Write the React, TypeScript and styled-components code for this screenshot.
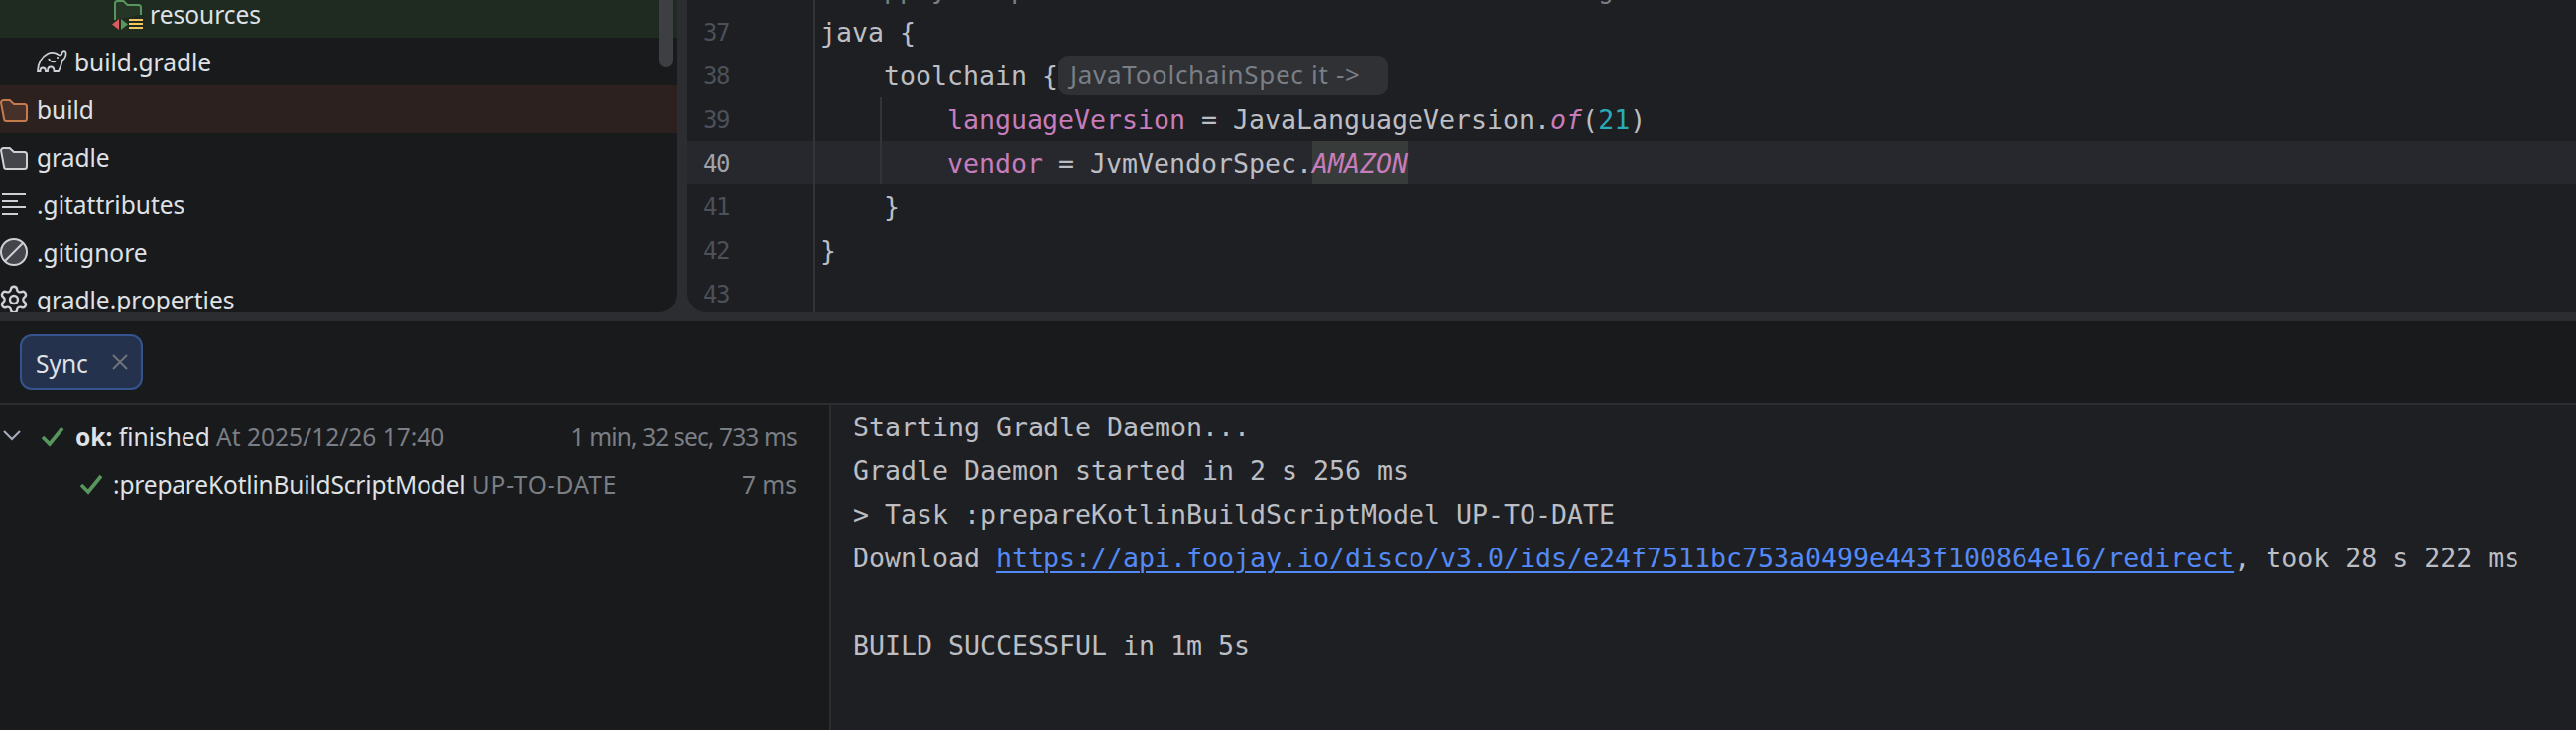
import { Settings } from "lucide-react";
import styled, { createGlobalStyle } from "styled-components";

const GlobalStyle = createGlobalStyle`
  html, body {
    margin: 0;
    background: #2b2d30;
  }
`;

const UI_FONT = `"Noto Sans", "Open Sans", sans-serif`;
const MONO_FONT = `"DejaVu Sans Mono", "Liberation Mono", monospace`;

const Page = styled.div`
  width: 2597px;
  height: 736px;
  overflow: hidden;
  display: flex;
  flex-direction: column;
  background: #2b2d30;
`;

const TopArea = styled.div`
  height: 315px;
  flex: none;
  display: flex;
  gap: 10px;
  margin-bottom: 9px;
`;

const Sidebar = styled.div`
  position: relative;
  width: 683px;
  flex: none;
  overflow: hidden;
  background: #191a1c;
  border-bottom-right-radius: 20px;
  font-family: ${UI_FONT};
  font-size: 24.5px;
  color: #dfe1e5;
`;

const FileList = styled.div`
  margin-top: -10px;
`;

const FileRow = styled.div<{ $level: number; $bg?: string }>`
  height: 48px;
  display: flex;
  align-items: center;
  padding-left: ${(p) => p.$level * 38}px;
  background: ${(p) => p.$bg ?? "transparent"};
  svg {
    flex: none;
    margin: 0 7px 0 -2px;
  }
`;

const Scrollbar = styled.div`
  position: absolute;
  top: -10px;
  left: 664px;
  width: 14px;
  height: 78px;
  border-radius: 7px;
  background: #3d3f42;
`;

const Editor = styled.div`
  flex: 1;
  overflow: hidden;
  background: #1e1f22;
  border-bottom-left-radius: 20px;
  font-family: ${MONO_FONT};
  font-size: 26.58px;
  color: #bcbec4;
`;

const CodeLines = styled.div`
  margin-top: -34px;
`;

const CodeLine = styled.div<{ $current?: boolean }>`
  height: 44px;
  display: flex;
  background: ${(p) => (p.$current ? "#26282e" : "transparent")};
`;

const LineNumber = styled.div<{ $current?: boolean }>`
  width: 111px;
  flex: none;
  padding-left: 16px;
  border-right: 2px solid #313438;
  font-size: 24px;
  letter-spacing: -1.4px;
  line-height: 46px;
  color: ${(p) => (p.$current ? "#a1a3ab" : "#4b5059")};
`;

const CodeText = styled.div<{ $guide?: boolean }>`
  position: relative;
  flex: 1;
  padding-left: 5px;
  line-height: 46px;
  white-space: pre;
  &::before {
    content: "";
    display: ${(p) => (p.$guide ? "block" : "none")};
    position: absolute;
    left: 65px;
    top: 0;
    bottom: 0;
    width: 2px;
    background: #313438;
  }
`;

const Comment = styled.span`
  color: #7a7e85;
`;

const Prop = styled.span`
  color: #c77dbb;
`;

const ItalicProp = styled(Prop)`
  font-style: italic;
`;

const Highlighted = styled(ItalicProp)`
  display: inline-block;
  height: 44px;
  background: #373b39;
`;

const NumberLit = styled.span`
  color: #2aacb8;
`;

const InlayHint = styled.span`
  display: inline-block;
  box-sizing: border-box;
  width: 332px;
  height: 40px;
  line-height: 38px;
  vertical-align: top;
  margin-top: 2px;
  padding-left: 12px;
  border-radius: 10px;
  background: #2f3135;
  color: #7a7e85;
  font-family: ${UI_FONT};
  font-size: 26px;
  letter-spacing: 0.7px;
`;

const BottomArea = styled.div`
  flex: 1;
  min-height: 0;
  display: flex;
  flex-direction: column;
  background: #191a1c;
`;

const TabBar = styled.div`
  height: 84px;
  flex: none;
  display: flex;
  align-items: center;
  padding-left: 20px;
  box-sizing: border-box;
  border-bottom: 2px solid #2b2d30;
`;

const Tab = styled.div`
  width: 124px;
  height: 56px;
  box-sizing: border-box;
  display: flex;
  align-items: center;
  padding: 3px 0 0 14px;
  border: 2px solid #35538f;
  border-radius: 12px;
  background: #25324d;
  font-family: ${UI_FONT};
  font-size: 24.5px;
  color: #dfe1e5;
  svg {
    margin: -3px 0 0 24px;
  }
`;

const Split = styled.div`
  flex: 1;
  min-height: 0;
  display: flex;
`;

const BuildTree = styled.div`
  width: 836px;
  flex: none;
  padding-top: 8px;
  border-right: 2px solid #2b2d30;
  font-family: ${UI_FONT};
  font-size: 24.5px;
  color: #dfe1e5;
`;

const TreeRow = styled.div<{ $pad: number }>`
  height: 48px;
  display: flex;
  align-items: center;
  padding: 0 33px 0 ${(p) => p.$pad}px;
  white-space: pre;
  svg {
    flex: none;
  }
`;

const IconSlot = styled.span<{ $left?: number; $right: number }>`
  display: flex;
  margin: 0 ${(p) => p.$right}px 0 ${(p) => p.$left ?? 0}px;
`;

const TreeLabel = styled.span``;

const TaskName = styled.span`
  letter-spacing: -0.17px;
`;

const Muted = styled.span`
  color: #7a7e85;
`;

const UpToDate = styled(Muted)`
  letter-spacing: 0.8px;
`;

const Duration = styled(Muted)<{ $tight?: boolean }>`
  margin-left: auto;
  letter-spacing: ${(p) => (p.$tight ? "-0.85px" : "0")};
`;

const Console = styled.div`
  flex: 1;
  padding-left: 22px;
  background: #1e1f22;
  font-family: ${MONO_FONT};
  font-size: 26.58px;
  line-height: 46px;
  color: #bcbec4;
  white-space: pre;
`;

const ConsoleLine = styled.div`
  height: 44px;
`;

const ConsoleLink = styled.span`
  color: #548af7;
  text-decoration: underline;
  text-decoration-thickness: 2px;
  text-underline-offset: 4px;
`;

const FolderIcon = ({ stroke, fill }: { stroke: string; fill: string }) => (
  <svg width="32" height="32" viewBox="0 0 32 32">
    <path
      d="M3 9.500a2.500 2.500 0 0 1 2.500-2.500h6.200l4.300 4h10.500a2.500 2.500 0 0 1 2.500 2.500v12a2.500 2.500 0 0 1-2.500 2.500h-18a2.500 2.500 0 0 1-2.500-2.500z"
      fill={fill}
      stroke={stroke}
      strokeWidth="2"
    />
  </svg>
);

const ResourcesIcon = () => (
  <svg width="32" height="32" viewBox="0 0 32 32">
    <path
      d="M4 22V5.500A2.500 2.500 0 0 1 6.500 3h6l4 4h11a2.500 2.500 0 0 1 2.500 2.500V17"
      fill="#253627"
      stroke="#57965c"
      strokeWidth="2"
    />
    <path d="M8 21v11l-7-5.500z" fill="#db5c5c" />
    <path d="M10 21v11l7-5.500z" fill="#57965c" />
    <path d="M18 22h14M18 26h14M18 30h14" stroke="#f2c55c" strokeWidth="2" />
  </svg>
);

const GradleIcon = () => (
  <svg width="32" height="32" viewBox="0 0 32 32" fill="none" stroke="#ced0d6" strokeWidth="1.8">
    <path d="M2 26C2 18 6 11 12 8c4-2 8-1 11 1 2 1 3.500 0 3.500-2 .5-2 3.500-2.500 4-.5.5 3-1 7-3.500 8-1 4-2 8-4 11.500h-4.500c0-3-1.500-4.500-3.500-4.500s-3 2-3 4.500H10c0-2.500-1.500-3.500-3-3.500s-2.500 1.500-2.500 3.500z" />
    <path d="M13 13c1 3 4 4 7 3" />
    <circle cx="22" cy="12" r="1.100" fill="#ced0d6" stroke="none" />
  </svg>
);

const AttributesIcon = () => (
  <svg width="32" height="32" viewBox="0 0 32 32" stroke="#ced0d6" strokeWidth="2">
    <path d="M4 6h24M4 13h16M4 19h24M4 26h16" />
  </svg>
);

const IgnoreIcon = () => (
  <svg width="32" height="32" viewBox="0 0 32 32">
    <circle cx="16" cy="16" r="13" fill="#43454a" stroke="#ced0d6" strokeWidth="2" />
    <path d="M7 25L25 7" stroke="#ced0d6" strokeWidth="2" />
  </svg>
);

const Chevron = () => (
  <svg width="24" height="24" viewBox="0 0 24 24" fill="none" stroke="#a8adbd" strokeWidth="2">
    <path d="M4 7l8 8 8-8" />
  </svg>
);

const Check = () => (
  <svg width="24" height="24" viewBox="0 0 24 24" fill="none" stroke="#57965c" strokeWidth="3.6">
    <path d="M2 13l7 7L22 4" />
  </svg>
);

const CloseIcon = () => (
  <svg width="16" height="16" viewBox="0 0 16 16" fill="none" stroke="#6f737a" strokeWidth="2">
    <path d="M1 1l14 14M15 1L1 15" />
  </svg>
);

export default function App() {
  return (
    <Page>
      <GlobalStyle />
      <TopArea>
        <Sidebar>
          <FileList>
            <FileRow $level={3} $bg="#1f2a20">
              <ResourcesIcon />
              resources
            </FileRow>
            <FileRow $level={1}>
              <GradleIcon />
              build.gradle
            </FileRow>
            <FileRow $level={0} $bg="#2d211f">
              <FolderIcon stroke="#c57b4e" fill="#45302a" />
              build
            </FileRow>
            <FileRow $level={0}>
              <FolderIcon stroke="#ced0d6" fill="#43454a" />
              gradle
            </FileRow>
            <FileRow $level={0}>
              <AttributesIcon />
              .gitattributes
            </FileRow>
            <FileRow $level={0}>
              <IgnoreIcon />
              .gitignore
            </FileRow>
            <FileRow $level={0}>
              <Settings size={32} strokeWidth={1.8} color="#ced0d6" />
              gradle.properties
            </FileRow>
          </FileList>
          <Scrollbar />
        </Sidebar>
        <Editor>
          <CodeLines>
            <CodeLine>
              <LineNumber>36</LineNumber>
              <CodeText>
                <Comment>// Apply a specific Java toolchain to ease working on different environments.</Comment>
              </CodeText>
            </CodeLine>
            <CodeLine>
              <LineNumber>37</LineNumber>
              <CodeText>{"java {"}</CodeText>
            </CodeLine>
            <CodeLine>
              <LineNumber>38</LineNumber>
              <CodeText>
                {"    toolchain {"}
                <InlayHint>{"JavaToolchainSpec it ->"}</InlayHint>
              </CodeText>
            </CodeLine>
            <CodeLine>
              <LineNumber>39</LineNumber>
              <CodeText $guide>
                {"        "}
                <Prop>languageVersion</Prop>
                {" = JavaLanguageVersion."}
                <ItalicProp>of</ItalicProp>
                {"("}
                <NumberLit>21</NumberLit>
                {")"}
              </CodeText>
            </CodeLine>
            <CodeLine $current>
              <LineNumber $current>40</LineNumber>
              <CodeText $guide>
                {"        "}
                <Prop>vendor</Prop>
                {" = JvmVendorSpec."}
                <Highlighted>AMAZON</Highlighted>
              </CodeText>
            </CodeLine>
            <CodeLine>
              <LineNumber>41</LineNumber>
              <CodeText>{"    }"}</CodeText>
            </CodeLine>
            <CodeLine>
              <LineNumber>42</LineNumber>
              <CodeText>{"}"}</CodeText>
            </CodeLine>
            <CodeLine>
              <LineNumber>43</LineNumber>
              <CodeText />
            </CodeLine>
          </CodeLines>
        </Editor>
      </TopArea>
      <BottomArea>
        <TabBar>
          <Tab>
            Sync
            <CloseIcon />
          </Tab>
        </TabBar>
        <Split>
          <BuildTree>
            <TreeRow $pad={0}>
              <Chevron />
              <IconSlot $left={17} $right={11}>
                <Check />
              </IconSlot>
              <TreeLabel>
                <b>ok:</b> finished <Muted>At 2025/12/26 17:40</Muted>
              </TreeLabel>
              <Duration $tight>1 min, 32 sec, 733 ms</Duration>
            </TreeRow>
            <TreeRow $pad={80}>
              <IconSlot $right={10}>
                <Check />
              </IconSlot>
              <TreeLabel>
                <TaskName>:prepareKotlinBuildScriptModel</TaskName> <UpToDate>UP-TO-DATE</UpToDate>
              </TreeLabel>
              <Duration>7 ms</Duration>
            </TreeRow>
          </BuildTree>
          <Console>
            <ConsoleLine>Starting Gradle Daemon...</ConsoleLine>
            <ConsoleLine>Gradle Daemon started in 2 s 256 ms</ConsoleLine>
            <ConsoleLine>{"> Task :prepareKotlinBuildScriptModel UP-TO-DATE"}</ConsoleLine>
            <ConsoleLine>
              Download{" "}
              <ConsoleLink>https://api.foojay.io/disco/v3.0/ids/e24f7511bc753a0499e443f100864e16/redirect</ConsoleLink>
              , took 28 s 222 ms
            </ConsoleLine>
            <ConsoleLine />
            <ConsoleLine>BUILD SUCCESSFUL in 1m 5s</ConsoleLine>
          </Console>
        </Split>
      </BottomArea>
    </Page>
  );
}
